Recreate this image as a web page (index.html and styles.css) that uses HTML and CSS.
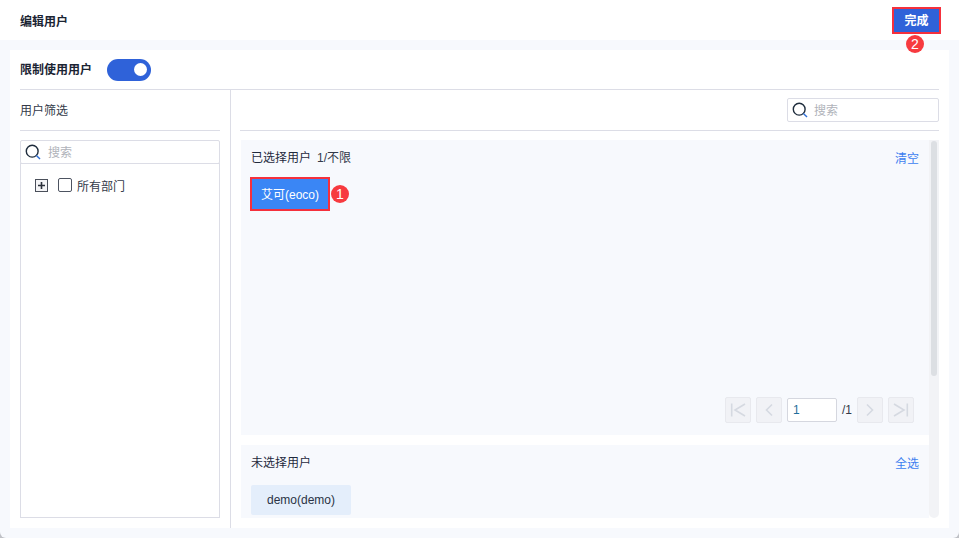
FILE: index.html
```html
<!DOCTYPE html>
<html lang="zh-CN">
<head>
<meta charset="utf-8">
<title>编辑用户</title>
<link rel="stylesheet" href="styles.css">
</head>
<body>
<div class="app">
  <header class="header">
    <span class="title">编辑用户</span>
    <div class="done-wrap">
      <button class="done">完成</button>
      <span class="badge badge-done">2</span>
    </div>
  </header>
  <main class="panel">
    <div class="limit-row">
      <span class="limit-label">限制使用用户</span>
      <span class="toggle"><span class="knob"></span></span>
    </div>
    <div class="columns">
      <aside class="left">
        <div class="left-title">用户筛选</div>
        <div class="search search-left">
          <svg class="search-icon" viewBox="0 0 16 16" width="16" height="16"><circle cx="7.2" cy="7.2" r="5.9" fill="none" stroke="#1f2d3d" stroke-width="1.4"/><path d="M11.4 11.4 15 15" stroke="#2f6fd6" stroke-width="1.4" fill="none"/></svg>
          <span class="placeholder">搜索</span>
        </div>
        <div class="tree">
          <div class="tree-row">
            <svg class="expander" viewBox="0 0 13 13" width="13" height="13"><rect x="0.5" y="0.5" width="12" height="12" fill="#f4f4f6" stroke="#4a4f5a"/><path d="M3 6.5H10M6.5 3V10" stroke="#2b303b" stroke-width="1.6"/></svg>
            <span class="checkbox"></span>
            <span class="tree-label">所有部门</span>
          </div>
        </div>
      </aside>
      <section class="right">
        <div class="right-top">
          <div class="search search-right">
            <svg class="search-icon" viewBox="0 0 16 16" width="16" height="16"><circle cx="7.2" cy="7.2" r="5.9" fill="none" stroke="#1f2d3d" stroke-width="1.4"/><path d="M11.4 11.4 15 15" stroke="#2f6fd6" stroke-width="1.4" fill="none"/></svg>
            <span class="placeholder">搜索</span>
          </div>
        </div>
        <div class="scroll">
          <div class="lists">
            <div class="group group-selected">
              <div class="group-head">
                <span>已选择用户<span class="count">1/不限</span></span>
                <a class="link">清空</a>
              </div>
              <div class="chip-row">
                <span class="chip chip-on">艾可(eoco)</span>
                <span class="badge badge-chip">1</span>
              </div>
              <div class="pager">
                <span class="page-btn"><svg viewBox="0 0 26 26" width="26" height="26"><path d="M6.7 6.5V19.5M20 7 10 13 20 19" fill="none" stroke="#d5d9e1" stroke-width="1.6"/></svg></span>
                <span class="page-btn"><svg viewBox="0 0 26 26" width="26" height="26"><path d="M16 7.5 10.5 13 16 18.5" fill="none" stroke="#d5d9e1" stroke-width="1.6"/></svg></span>
                <span class="page-input">1</span>
                <span class="page-total">/1</span>
                <span class="page-btn"><svg viewBox="0 0 26 26" width="26" height="26"><path d="M10 7.5 15.5 13 10 18.5" fill="none" stroke="#d5d9e1" stroke-width="1.6"/></svg></span>
                <span class="page-btn"><svg viewBox="0 0 26 26" width="26" height="26"><path d="M19.3 6.5V19.5M6 7 16 13 6 19" fill="none" stroke="#d5d9e1" stroke-width="1.6"/></svg></span>
              </div>
            </div>
            <div class="group group-rest">
              <div class="group-head">
                <span>未选择用户</span>
                <a class="link">全选</a>
              </div>
              <div class="chip-row-rest">
                <span class="chip chip-off">demo(demo)</span>
              </div>
            </div>
          </div>
          <div class="scrollbar"><div class="thumb"></div></div>
        </div>
      </section>
    </div>
  </main>
</div>
</body>
</html>
```
FILE: styles.css
```css
* { box-sizing: border-box; }
html, body { margin: 0; padding: 0; }
body {
  width: 959px;
  height: 538px;
  overflow: hidden;
  background: #bfc1c6;
  font-family: "Liberation Sans", "Noto Sans CJK SC", sans-serif;
  font-size: 12px;
  color: #1f2a3d;
}
.app {
  display: flex;
  flex-direction: column;
  height: 538px;
  background: #f7f9fd;
  border-radius: 0 0 6px 6px;
}
.header {
  height: 40px;
  flex: none;
  background: #fff;
  display: flex;
  align-items: center;
  justify-content: space-between;
  padding: 0 18px 0 20px;
}
.title { font-weight: 700; color: #1b2433; }
.done-wrap { position: relative; display: flex; }
.done {
  width: 49px;
  height: 27px;
  padding: 0 0 2px;
  border: 2px solid #f5303c;
  background: #2f62d9;
  color: #fff;
  font: 700 12px "Liberation Sans", "Noto Sans CJK SC", sans-serif;
}
.badge {
  position: absolute;
  width: 18px;
  height: 18px;
  border-radius: 50%;
  background: #f73a3f;
  color: #fff;
  font-size: 14px;
  line-height: 18px;
  text-align: center;
}
.badge-done { left: 14px; top: 28px; }
.panel {
  flex: 1;
  margin: 10px;
  background: #fff;
  display: flex;
  flex-direction: column;
  padding: 0 10px;
  min-height: 0;
}
.limit-row {
  height: 40px;
  flex: none;
  display: flex;
  align-items: center;
  gap: 15px;
  border-bottom: 1px solid #dcdde6;
}
.limit-label { font-weight: 700; color: #1b2433; padding-bottom: 2px; }
.toggle {
  width: 44px;
  height: 22px;
  border-radius: 11px;
  background: #2f62d9;
  display: flex;
  align-items: center;
  justify-content: flex-end;
  padding-right: 4px;
}
.knob { width: 13px; height: 13px; border-radius: 50%; background: #fff; }
.columns { flex: 1; display: flex; min-height: 0; }
.left {
  width: 211px;
  flex: none;
  border-right: 1px solid #dcdde6;
  padding: 0 10px 10px 0;
  display: flex;
  flex-direction: column;
}
.left-title {
  height: 41px;
  flex: none;
  line-height: 43px;
  border-bottom: 1px solid #dcdde6;
  margin-bottom: 9px;
  color: #333a49;
}
.search {
  display: flex;
  align-items: center;
  background: #fff;
  border: 1px solid #dcdde6;
  border-radius: 2px;
}
.search-left { height: 24px; flex: none; padding-left: 4px; gap: 7px; margin-bottom: -1px; }
.search-right { width: 152px; height: 24px; padding-left: 4px; gap: 6px; }
.search-icon { flex: none; }
.placeholder { color: #b0b3ba; padding-bottom: 2px; }
.tree { flex: 1; border: 1px solid #dcdde6; }
.tree-row { display: flex; align-items: center; height: 42px; padding-left: 14px; }
.expander { flex: none; margin-right: 10px; }
.checkbox {
  width: 14px;
  height: 14px;
  border: 1px solid #4d5361;
  border-radius: 2px;
  margin-right: 5px;
}
.tree-label { color: #333a49; }
.right { flex: 1; min-width: 0; display: flex; flex-direction: column; padding: 0 0 10px 9px; }
.right-top {
  height: 41px;
  flex: none;
  display: flex;
  justify-content: flex-end;
  align-items: flex-start;
  padding-top: 8px;
  border-bottom: 1px solid #dcdde6;
  margin-bottom: 9px;
}
.scroll { flex: 1; min-height: 0; display: flex; overflow: hidden; }
.lists { flex: 1; min-width: 0; padding-left: 1px; display: flex; flex-direction: column; gap: 10px; overflow: hidden; }
.group { background: #f7f9fd; padding: 0 10px; flex: none; }
.group-selected { height: 295px; position: relative; }
.group-rest { height: 90px; }
.group-head {
  display: flex;
  justify-content: space-between;
  align-items: flex-start;
  height: 36px;
  padding-top: 8px;
  color: #1f2a3d;
}
.group-selected .group-head { height: 37px; }
.count { margin-left: 6px; color: #333a49; }
.link { color: #3d7ff0; margin-top: 1px; }
.chip-row { position: relative; display: flex; margin-left: -1px; }
.chip { display: inline-flex; align-items: center; justify-content: center; }
.chip-on {
  width: 80px;
  height: 34px;
  padding-bottom: 2px;
  background: #3a86f5;
  border: 2px solid #f5303c;
  color: #fff;
}
.badge-chip { left: 81px; top: 8px; }
.chip-off {
  width: 100px;
  height: 30px;
  background: #e4eefb;
  border-radius: 2px;
  color: #2a3245;
}
.chip-row-rest { padding-top: 4px; }
.pager {
  position: absolute;
  right: 15px;
  top: 257px;
  display: flex;
  align-items: center;
  gap: 5px;
}
.page-btn {
  width: 26px;
  height: 26px;
  background: #f1f2f6;
  border: 1px solid #e8e9ee;
  border-radius: 2px;
  display: flex;
  align-items: center;
  justify-content: center;
}
.page-btn svg { flex: none; margin: -1px; }
.page-input {
  width: 50px;
  height: 24px;
  background: #fff;
  border: 1px solid #d5d7df;
  border-radius: 2px;
  line-height: 22px;
  padding-left: 5px;
  color: #1f6f9c;
}
.page-total { color: #333a49; width: 10px; }
.scrollbar {
  width: 10px;
  flex: none;
  background: #f2f3f6;
  border-radius: 0 0 5px 5px;
  padding: 1px 2px;
}
.thumb { width: 6px; height: 235px; background: #dcdfe3; border-radius: 3px; }
```
